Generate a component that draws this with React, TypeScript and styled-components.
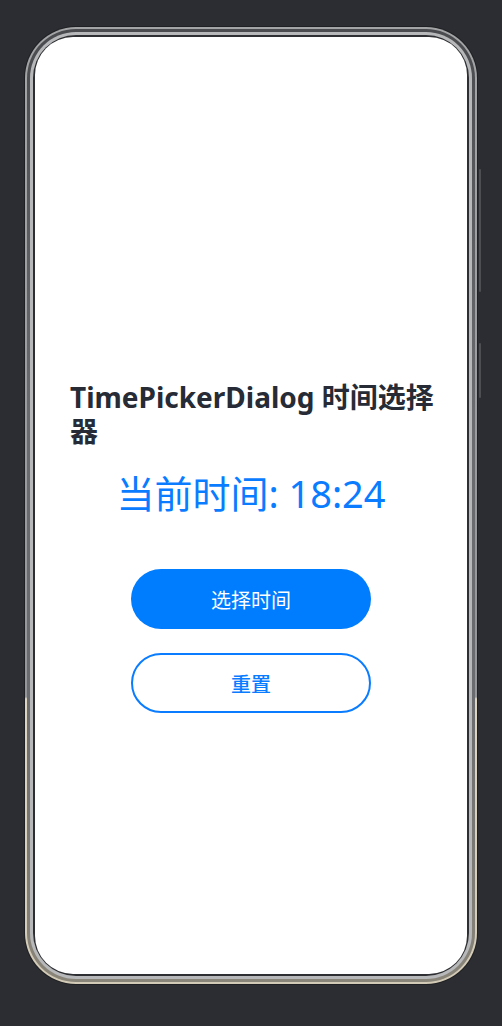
import React from "react";
import styled, { createGlobalStyle } from "styled-components";

const Global = createGlobalStyle`
  html, body { margin: 0; padding: 0; background: #2c2d32; }
  body { font-family: "Noto Sans", "Noto Sans CJK SC", sans-serif; }
`;

const Stage = styled.div`
  width: 502px;
  height: 1026px;
  box-sizing: border-box;
  padding: 26px 24px 0 24px;
  background: #2c2d32;
`;

const Ring = styled.div<{ $pad: number; $radius: number; $bg: string }>`
  position: relative;
  width: 100%;
  height: 100%;
  box-sizing: border-box;
  padding: ${(p) => p.$pad}px;
  border-radius: ${(p) => p.$radius}px;
  background: ${(p) => p.$bg};
`;

const Frame = styled.div`
  position: relative;
  width: 454px;
  height: 959px;
  box-sizing: border-box;
  padding: 1px;
  border-radius: 52px;
  background: #1f2023;
`;

const Screen = styled.div`
  width: 100%;
  height: 100%;
  box-sizing: border-box;
  background: #ffffff;
  border-radius: 38px;
  display: flex;
  flex-direction: column;
  align-items: center;
  padding: 343px 35px 0 35px;
`;

const SideKey = styled.div<{ $top: number; $len: number }>`
  position: absolute;
  right: -3px;
  top: ${(p) => p.$top}px;
  height: ${(p) => p.$len}px;
  width: 2px;
  border-radius: 1px;
  background: #4d4e52;
`;

const Title = styled.h1`
  align-self: stretch;
  margin: 0 -7px 0 0;
  font-size: 28px;
  line-height: 34px;
  font-weight: 700;
  color: #262b35;
`;

const TimeText = styled.div`
  margin-top: 21px;
  font-size: 38px;
  line-height: 48px;
  color: #0a7cff;
  font-weight: 400;
`;

const Buttons = styled.div`
  margin-top: 52px;
  display: flex;
  flex-direction: column;
  gap: 24px;
`;

const Pill = styled.button<{ $variant: "solid" | "outline" }>`
  width: 240px;
  height: 60px;
  box-sizing: border-box;
  border-radius: 30px;
  font-family: "Noto Sans", "Noto Sans CJK SC", sans-serif;
  font-size: 20px;
  font-weight: ${(p) => (p.$variant === "solid" ? 400 : 500)};
  color: ${(p) => (p.$variant === "solid" ? "#ffffff" : "#0a7cff")};
  background: ${(p) => (p.$variant === "solid" ? "#007dff" : "#ffffff")};
  border: ${(p) => (p.$variant === "solid" ? "none" : "2px solid #0a7cff")};
  display: flex;
  align-items: center;
  justify-content: center;
  padding: 0;
`;

const rimBg =
  "linear-gradient(180deg, #a3a4a6 0%, #95969a 70%, #ddd5c1 70.2%, #d2cab6 100%)";
const bandBg =
  "linear-gradient(180deg, #4a4b4e 0%, #6a6b6e 40%, #6a6b6e 70%, #8a8579 100%)";

export default function App() {
  return (
    <Stage>
      <Global />
      <Frame>
        <SideKey $top={143} $len={123} />
        <SideKey $top={317} $len={55} />
        <Ring $pad={2} $radius={51} $bg={rimBg}>
          <Ring $pad={3} $radius={49} $bg={bandBg}>
            <Ring $pad={3} $radius={46} $bg="#b7b8ba">
              <Ring $pad={2} $radius={43} $bg="#2e2f32">
                <Screen>
                  <Title>TimePickerDialog 时间选择器</Title>
                  <TimeText>当前时间: 18:24</TimeText>
                  <Buttons>
                    <Pill $variant="solid">选择时间</Pill>
                    <Pill $variant="outline">重置</Pill>
                  </Buttons>
                </Screen>
              </Ring>
            </Ring>
          </Ring>
        </Ring>
      </Frame>
    </Stage>
  );
}
